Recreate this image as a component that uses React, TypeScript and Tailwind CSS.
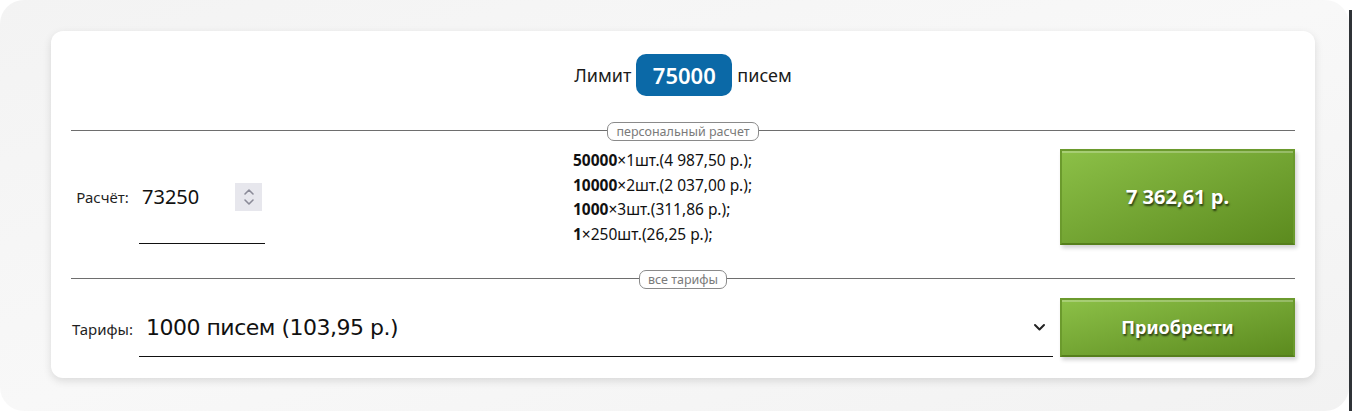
import React from "react";

const ui = { fontFamily: '"Noto Sans", "Open Sans", sans-serif' };

function Divider({ label }: { label: string }) {
  return (
    <div className="relative flex h-[20px] items-center justify-center">
      <div className="absolute left-0 right-0 top-[9px] h-px bg-[#6e6e6e]" />
      <span className="relative rounded-[7px] border border-[#8a8a8a] bg-white px-[8px] text-[12.5px] leading-[17px] text-[#7a7a7a]">
        {label}
      </span>
    </div>
  );
}

function GreenButton({ children, className }: { children: React.ReactNode; className: string }) {
  return (
    <button
      className={
        "flex w-[235px] items-center justify-center border-2 border-[#6b9a2d] border-b-[#567f1c] bg-gradient-to-br from-[#8cc047] to-[#5c8b1e] font-bold text-white shadow-[inset_0_2px_0_rgba(255,255,255,0.25),2px_3px_4px_rgba(0,0,0,0.18)] [text-shadow:1px_2px_2px_rgba(0,0,0,0.65)] " +
        className
      }
    >
      {children}
    </button>
  );
}

export default function App() {
  return (
    <div className="flex h-[411px] w-[1352px] bg-white" style={ui}>
      <div className="flex-1 rounded-[24px] bg-gradient-to-br from-[#f3f3f3] via-[#f8f8f8] to-[#f2f2f2] pl-[51px] pr-[34px] pt-[31px]">
        <div className="rounded-[12px] bg-white px-[20px] pb-[21px] pt-[23px] shadow-[0_3px_8px_rgba(0,0,0,0.12)]">
          <div className="flex h-[42px] items-center justify-center gap-[5px] text-[18px] text-[#1a1a1a]">
            <span>Лимит</span>
            <span className="flex h-[42px] w-[96px] items-center justify-center rounded-[10px] bg-[#0b69a7] text-[22px] font-semibold text-white">
              75000
            </span>
            <span>писем</span>
          </div>

          <div className="mt-[25px]">
            <Divider label="персональный расчет" />
          </div>

          <div className="mt-[8px] flex h-[96px]">
            <div className="flex w-[63px] items-center justify-center pt-[1px] text-[15px] text-[#1f1f1f]">Расчёт:</div>
            <div className="ml-[5px] flex w-[126px] flex-col">
              <div className="mt-[34px] flex h-[28px] items-center">
                <span className="ml-[3px] flex-1 text-[20px] text-[#111]">73250</span>
                <div className="mr-[3px] flex h-[28px] w-[27px] flex-col items-center justify-center bg-[#e7e7ed]">
                  <svg width="12" height="22" viewBox="0 0 12 22" fill="none" stroke="#8b8b98" strokeWidth="1.6" strokeLinecap="round" strokeLinejoin="round">
                    <path d="M2 8 L6 4 L10 8" />
                    <path d="M2 14 L6 18 L10 14" />
                  </svg>
                </div>
              </div>
              <div className="mt-[32px] h-px bg-[#111]" />
            </div>
            <div className="flex flex-1 items-center justify-center">
              <div className="text-[15.5px] leading-[24.5px] text-[#111]">
                <div><b>50000</b>×1шт.(4 987,50 р.);</div>
                <div><b>10000</b>×2шт.(2 037,00 р.);</div>
                <div><b>1000</b>×3шт.(311,86 р.);</div>
                <div><b>1</b>×250шт.(26,25 р.);</div>
              </div>
            </div>
            <GreenButton className="h-[96px] text-[20px]">7 362,61 р.</GreenButton>
          </div>

          <div className="mt-[24px]">
            <Divider label="все тарифы" />
          </div>

          <div className="mt-[9px] flex h-[59px] items-stretch">
            <div className="flex w-[63px] items-center justify-center pt-[4px] text-[15px] text-[#1f1f1f]">Тарифы:</div>
            <div className="ml-[5px] mr-[7px] flex flex-1 items-center border-b border-[#111]">
              <span className="ml-[7px] flex-1 text-[22px] text-[#111]" style={{ fontFamily: '"DejaVu Sans", sans-serif', letterSpacing: "-0.5px" }}>
                1000 писем (103,95 р.)
              </span>
              <svg className="mr-[7px]" width="13" height="9" viewBox="0 0 13 9" fill="none" stroke="#222" strokeWidth="2" strokeLinecap="round" strokeLinejoin="round">
                <path d="M2 2 L6.5 6.5 L11 2" />
              </svg>
            </div>
            <GreenButton className="h-[59px] text-[18px]">Приобрести</GreenButton>
          </div>
        </div>
      </div>
      <div className="mt-[10px] w-[3px] bg-[#2f3337]" />
    </div>
  );
}
